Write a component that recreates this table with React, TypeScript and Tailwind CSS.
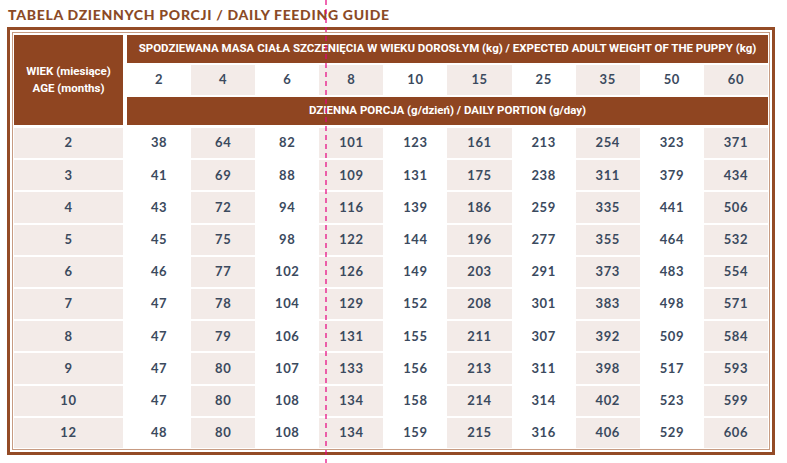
import React from 'react';

const weights = [2, 4, 6, 8, 10, 15, 25, 35, 50, 60];

const rows: [number, number[]][] = [
  [2, [38, 64, 82, 101, 123, 161, 213, 254, 323, 371]],
  [3, [41, 69, 88, 109, 131, 175, 238, 311, 379, 434]],
  [4, [43, 72, 94, 116, 139, 186, 259, 335, 441, 506]],
  [5, [45, 75, 98, 122, 144, 196, 277, 355, 464, 532]],
  [6, [46, 77, 102, 126, 149, 203, 291, 373, 483, 554]],
  [7, [47, 78, 104, 129, 152, 208, 301, 383, 498, 571]],
  [8, [47, 79, 106, 131, 155, 211, 307, 392, 509, 584]],
  [9, [47, 80, 107, 133, 156, 213, 311, 398, 517, 593]],
  [10, [47, 80, 108, 134, 158, 214, 314, 402, 523, 599]],
  [12, [48, 80, 108, 134, 159, 215, 316, 406, 529, 606]],
];

const numFont = "font-['Lato',sans-serif] font-bold text-[13px] tracking-[0.6px] text-[#3b4a5e]";
const headFont = "font-['Roboto',sans-serif] font-bold text-white";

function NumberRow({ values }: { values: number[] }) {
  return (
    <div className="grid grid-cols-10 flex-1">
      {values.map((v, i) => (
        <div
          key={i}
          className={`flex items-center justify-center ${numFont} ${i % 2 === 1 ? 'bg-[#f3ebe8]' : 'bg-white'}`}
        >
          {v}
        </div>
      ))}
    </div>
  );
}

export default function App() {
  return (
    <div className="relative w-[787px] h-[463px] bg-white overflow-hidden">
      <h1 className="pl-[8px] pt-[6px] h-[27px] font-['Lato',sans-serif] font-black text-[14px] leading-[18px] tracking-[0.7px] text-[#8b4a26]">
        TABELA DZIENNYCH PORCJI / DAILY FEEDING GUIDE
      </h1>

      <div className="ml-[7px] w-[768px] border-[3px] border-[#944b26] p-[2px]">
        <div className="border border-[#c79b82] px-[1px] pt-[2px] pb-[1px] flex flex-col gap-[3px]">
          {/* header */}
          <div className="flex gap-[4px] h-[90px]">
            <div className={`w-[109px] bg-[#8f4521] flex flex-col items-center justify-center text-[11.5px] leading-[17px] ${headFont}`}>
              <span>WIEK (miesiące)</span>
              <span>AGE (months)</span>
            </div>
            <div className="flex-1 flex flex-col gap-[2px]">
              <div className={`h-[28px] bg-[#8f4521] flex items-center justify-center text-[11.5px] ${headFont}`}>
                SPODZIEWANA MASA CIAŁA SZCZENIĘCIA W WIEKU DOROSŁYM (kg) / EXPECTED ADULT WEIGHT OF THE PUPPY (kg)
              </div>
              <div className="h-[30px] flex">
                <NumberRow values={weights} />
              </div>
              <div className={`h-[28px] bg-[#8f4521] flex items-center justify-center text-[11.5px] ${headFont}`}>
                DZIENNA PORCJA (g/dzień) / DAILY PORTION (g/day)
              </div>
            </div>
          </div>

          {/* data rows */}
          <div className="grid grid-rows-10 gap-[2px] h-[320px]">
            {rows.map(([age, values]) => (
              <div key={age} className="flex gap-[4px]">
                <div className={`w-[109px] bg-[#f3ebe8] flex items-center justify-center ${numFont}`}>{age}</div>
                <NumberRow values={values} />
              </div>
            ))}
          </div>
        </div>
      </div>

      <svg className="absolute left-[325px] top-0" width="2" height="463">
        <line x1="1" y1="0" x2="1" y2="463" stroke="#e6007e" strokeWidth="1.2" strokeDasharray="5 4" />
      </svg>
    </div>
  );
}
